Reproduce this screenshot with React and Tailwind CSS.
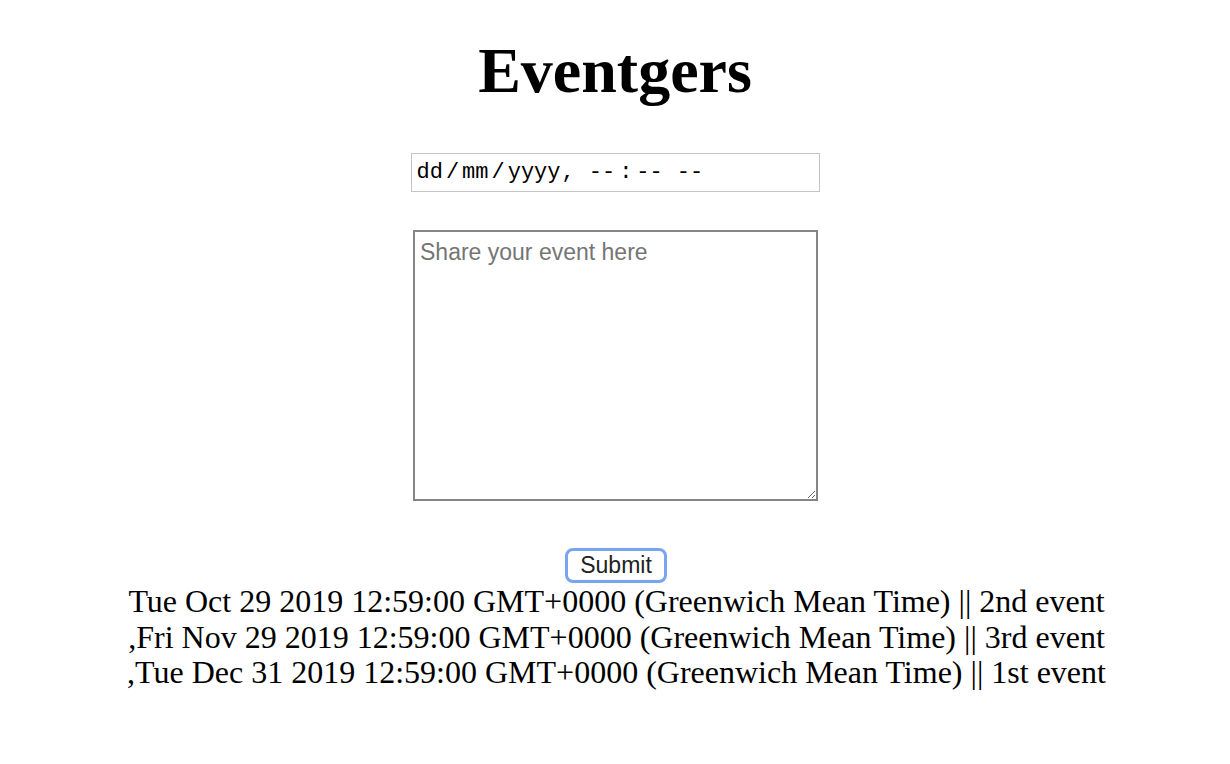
import React from 'react';

const events = [
  'Tue Oct 29 2019 12:59:00 GMT+0000 (Greenwich Mean Time) || 2nd event',
  ',Fri Nov 29 2019 12:59:00 GMT+0000 (Greenwich Mean Time) || 3rd event',
  ',Tue Dec 31 2019 12:59:00 GMT+0000 (Greenwich Mean Time) || 1st event',
];

const App = () => {
  return (
    <div className="min-h-[764px] bg-white flex flex-col items-center text-black font-['Liberation_Serif',serif]">
      <h1 className="mt-[34px] text-[64px] leading-[74px] font-bold">Eventgers</h1>

      <div className="mt-[45px] w-[409px] h-[39px] border border-[#c4c4c4] flex items-center pl-[5px] font-['Liberation_Mono',monospace] text-[22px] text-black whitespace-pre">
        <span>dd</span>
        <span className="mx-[3px]">/</span>
        <span>mm</span>
        <span className="mx-[3px]">/</span>
        <span>yyyy</span>
        <span className="ml-[1px]">,</span>
        <span className="ml-[14px]">--</span>
        <span className="mx-[4px]">:</span>
        <span>--</span>
        <span className="ml-[14px]">--</span>
      </div>

      <textarea
        className="mt-[38px] ml-[1px] w-[405px] h-[271px] border-2 border-[#858585] pt-[3px] px-[5px] font-['Liberation_Sans',sans-serif] text-[23px] text-black placeholder:text-[#757575] outline-none"
        placeholder="Share your event here"
      />

      <button className="mt-[47px] ml-[2px] w-[102px] h-[35px] rounded-[8px] border-[3px] border-[#79a5f0] bg-white flex items-center justify-center font-['Liberation_Sans',sans-serif] text-[23px] text-[#222]">
        Submit
      </button>

      <div className="mt-[1px] ml-[3px] text-[32px] leading-[35.5px] text-center">
        {events.map((e) => (
          <div key={e}>{e}</div>
        ))}
      </div>
    </div>
  );
};

export default App;
